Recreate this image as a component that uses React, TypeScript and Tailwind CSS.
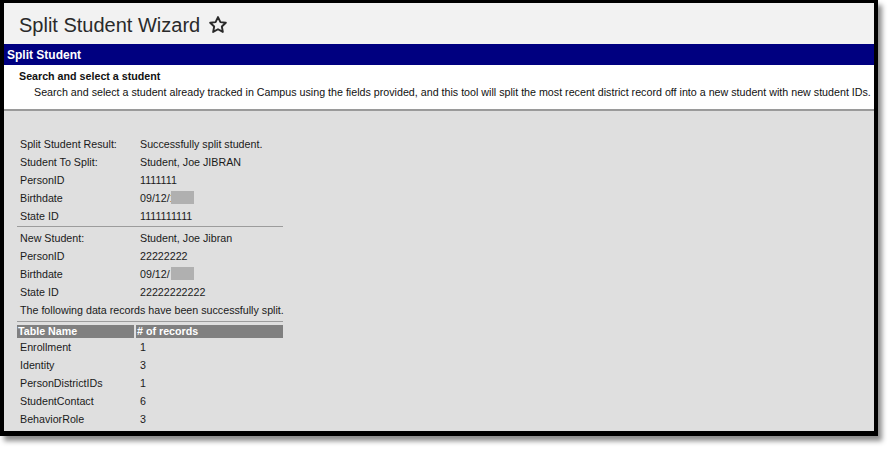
import React from 'react';

// Split Student Wizard result screen

type Row = { label: string; value: string; redact?: boolean };

const before: Row[] = [
  { label: 'Split Student Result:', value: 'Successfully split student.' },
  { label: 'Student To Split:', value: 'Student, Joe JIBRAN' },
  { label: 'PersonID', value: '1111111' },
  { label: 'Birthdate', value: '09/12/1', redact: true },
  { label: 'State ID', value: '1111111111' },
];

const after: Row[] = [
  { label: 'New Student:', value: 'Student, Joe Jibran' },
  { label: 'PersonID', value: '22222222' },
  { label: 'Birthdate', value: '09/12/', redact: true },
  { label: 'State ID', value: '22222222222' },
];

const records = [
  { name: 'Enrollment', count: 1 },
  { name: 'Identity', count: 3 },
  { name: 'PersonDistrictIDs', count: 1 },
  { name: 'StudentContact', count: 6 },
  { name: 'BehaviorRole', count: 3 },
];

const InfoRow: React.FC<{ row: Row }> = ({ row }) => (
  <div className="flex h-[18px] items-center whitespace-nowrap">
    <span className="w-[123px] pl-[3px]">{row.label}</span>
    <span className="relative">
      {row.value}
      {row.redact && <span className="absolute left-[31px] top-[-2px] h-[13px] w-[23px] bg-[#b0b0b0]" />}
    </span>
  </div>
);

const App: React.FC = () => {
  return (
    <div className="h-[450px] w-[893px] bg-white" style={{ fontFamily: '"Liberation Sans", Arial, sans-serif' }}>
      <div className="flex h-[436px] w-[878px] flex-col border-b-[5px] border-l-4 border-r-4 border-t-[3px] border-black bg-[#dfdfdf] shadow-[4px_5px_5px_rgba(0,0,0,0.45)]">
        {/* page title */}
        <div className="flex h-[41px] items-center gap-[8px] bg-[#f2f2f2] pl-[15px] pt-[2px]">
          <h1 className="text-[20px] leading-none text-[#2a2a2a]">Split Student Wizard</h1>
          <svg width="20" height="20" viewBox="0 0 24 24" fill="none" stroke="#2a2a2a" strokeWidth="2.3" strokeLinejoin="round">
            <path d="M12 2.5l2.9 6 6.5.8-4.8 4.5 1.2 6.5L12 17.1l-5.8 3.2 1.2-6.5-4.8-4.5 6.5-.8z" />
          </svg>
        </div>

        {/* section header */}
        <div className="flex h-[21px] items-center bg-[#000080] pl-[3px] text-[12px] font-bold text-white">
          Split Student
        </div>

        <div className="h-[46px] whitespace-nowrap border-b-2 border-[#9a9a9a] bg-white pt-[3px] text-[10.7px] text-[#111]">
          <div className="pl-[15px] font-bold leading-[16px]">Search and select a student</div>
          <div className="pl-[30px] leading-[16px]">
            Search and select a student already tracked in Campus using the fields provided, and this tool will split the most
            recent district record off into a new student with new student IDs.
          </div>
        </div>

        {/* result */}
        <div className="w-[280px] pl-[13px] pt-[24px] text-[10.7px] leading-none text-[#1a1a1a]">
          {before.map((row, i) => (
            <InfoRow key={i} row={row} />
          ))}
          <div className="mb-[2px] mt-[1px] h-px w-[266px] bg-[#9c9c9c]" />
          {after.map((row, i) => (
            <InfoRow key={i} row={row} />
          ))}
          <div className="flex h-[18px] items-center whitespace-nowrap pl-[3px]">
            The following data records have been successfully split.
          </div>
          <div className="mt-[2px] h-px w-[266px] bg-[#9c9c9c]" />
          <div className="mt-[3px] flex h-[13px] w-[266px] gap-[2px] font-bold text-white">
            <div className="flex w-[117px] items-center bg-[#808080] pl-[1px]">Table Name</div>
            <div className="flex flex-1 items-center bg-[#808080] pl-[1px]">&#35; of records</div>
          </div>
          <div>
            {records.map(r => (
              <div key={r.name} className="flex h-[18px] items-center">
                <span className="w-[123px] pl-[3px]">{r.name}</span>
                <span>{r.count}</span>
              </div>
            ))}
          </div>
        </div>
      </div>
    </div>
  );
};

export default App;
